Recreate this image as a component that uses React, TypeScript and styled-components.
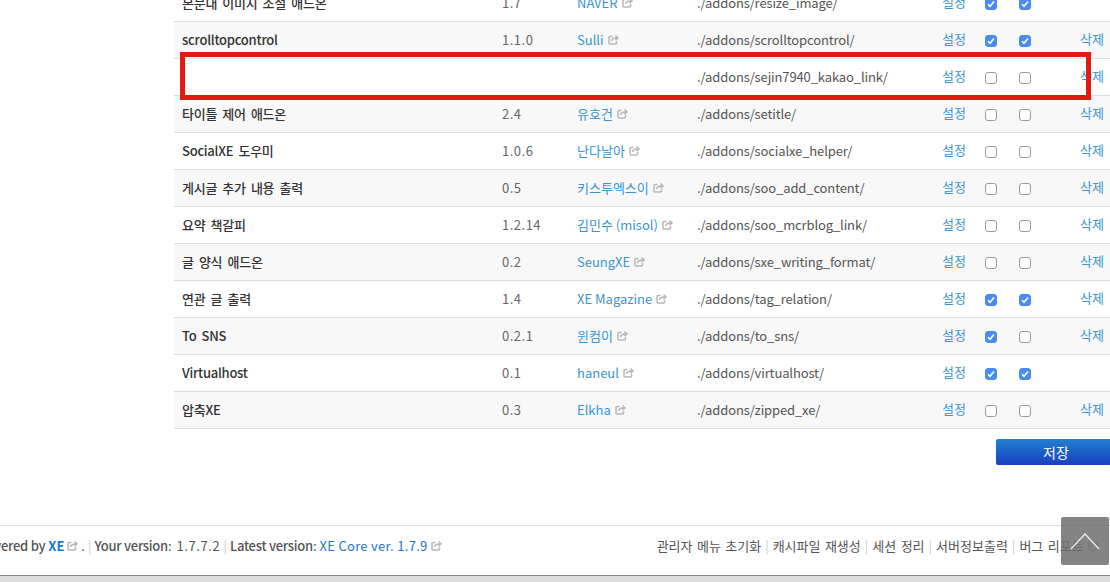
import React from "react";
import styled, { createGlobalStyle } from "styled-components";

const GlobalStyle = createGlobalStyle`
    html, body {
        margin: 0;
        padding: 0;
        height: 582px;
        overflow: hidden;
        background: #fff;
    }
    body {
        font-family: "Noto Sans CJK KR", "Liberation Sans", sans-serif;
        font-size: 13px;
        color: #333;
    }
`;
const Page = styled.div`
    position: relative;
    width: 1110px;
    height: 582px;
    overflow: hidden;
`;
const Content = styled.div`
    margin-top: -15px;
    padding-left: 174px;
`;
const Row = styled.div<{ $shade: boolean }>`
    display: grid;
    grid-template-columns: 328px 75px 120px 245px 43px 34px 61px 44px;
    align-items: center;
    width: 950px;
    height: 34px;
    padding-bottom: 2px;
    border-bottom: 1px solid #ddd;
    background: ${(p) => (p.$shade ? "#f8f8f8" : "#fff")};
`;
const Name = styled.div`
    padding-left: 8px;
    font-weight: 500;
    letter-spacing: -0.25px;
    word-spacing: 2.5px;
    color: #333;
    white-space: nowrap;
`;
const Version = styled.div`
    letter-spacing: 0.5px;
    color: #666;
    white-space: nowrap;
`;
const AddonPath = styled.div`
    letter-spacing: -0.13px;
    color: #555;
    white-space: nowrap;
`;
const Author = styled.div`
    display: flex;
    align-items: center;
    gap: 4px;
    color: #3a95d0;
    white-space: nowrap;
`;
const SetLink = styled.div`
    margin-bottom: 2px;
    color: #3a95d0;
    white-space: nowrap;
`;
const DeleteLink = styled.div`
    margin-bottom: 2px;
    color: #3a95d0;
    white-space: nowrap;
`;
const Check = styled.span<{ $on: boolean }>`
    display: flex;
    align-items: center;
    justify-content: center;
    box-sizing: border-box;
    width: 12px;
    height: 12px;
    margin-top: 4px;
    border-radius: 3px;
    border: 1px solid ${(p) => (p.$on ? "#4a8cf0" : "#9a9a9a")};
    background: ${(p) => (p.$on ? "#4a8cf0" : "#fff")};
`;
const Actions = styled.div`
    display: flex;
    justify-content: flex-end;
    width: 936px;
    padding-top: 10px;
`;
const SaveButton = styled.button`
    flex: none;
    width: 120px;
    height: 26px;
    margin-right: -6px;
    padding: 0;
    border: 0;
    border-radius: 2px;
    background: linear-gradient(#2080cf, #1a3fc0);
    color: #fff;
    font: inherit;
    font-size: 14px;
`;
const Footer = styled.div`
    position: absolute;
    left: 0;
    right: 0;
    bottom: 0;
    height: 56px;
    border-top: 1px solid #ddd;
    display: flex;
    flex-direction: column;
`;
const FooterBody = styled.div`
    flex: 1;
    display: flex;
    align-items: center;
    justify-content: space-between;
    padding: 0 11px 11px 0;
    color: #555;
`;
const FooterLeft = styled.div`
    display: flex;
    align-items: center;
    margin-left: -25px;
    white-space: nowrap;
`;
const FooterRight = styled.div`
    display: flex;
    align-items: center;
    word-spacing: 1.5px;
    white-space: nowrap;
`;
const Strong = styled.span`
    font-weight: 500;
    letter-spacing: -0.25px;
`;
const VersionNumber = styled.span`
    margin-left: 2px;
    letter-spacing: 0.6px;
`;
const BlueLink = styled.span<{ $bold?: boolean }>`
    color: #1e78c8;
    font-weight: ${(p) => (p.$bold ? 700 : 400)};
    letter-spacing: ${(p) => (p.$bold ? 0 : "0.3px")};
`;
const Sep = styled.span<{ $tight?: boolean }>`
    margin: 0 ${(p) => (p.$tight ? 3 : 4)}px;
    color: #ccc;
`;
const FooterBar = styled.div`
    height: 6px;
    border-top: 1px solid #888;
    background: #ddd;
`;
const RedBox = styled.div`
    position: absolute;
    left: 180px;
    top: 52px;
    box-sizing: border-box;
    width: 911px;
    height: 48px;
    border: 5px solid #e31a12;
    pointer-events: none;
`;
const TopButton = styled.div`
    position: absolute;
    left: 1061px;
    top: 517px;
    display: flex;
    align-items: center;
    justify-content: center;
    width: 48px;
    height: 48px;
    border-radius: 2px;
    background: rgba(110, 110, 110, 0.85);
`;

const ExternalIcon = () => (
    <svg width="11" height="11" viewBox="0 0 11 11" fill="none" stroke="#b8b8b8" strokeWidth="1.5">
        <path d="M8.500 7v2a1 1 0 0 1-1 1H2a1 1 0 0 1-1-1V3.500a1 1 0 0 1 1-1h2.500" />
        <path d="M3.500 7c.4-2 2-3.200 6-3.200M7.500 1.500l2.500 2.300-2.500 2.300" />
    </svg>
);

const Tick = () => (
    <svg width="8" height="8" viewBox="0 0 8 8" fill="none" stroke="#fff" strokeWidth="1.6">
        <path d="M1 4.200l2 2L7 1.500" />
    </svg>
);

type Addon = {
    name: string;
    version: string;
    author: string;
    path: string;
    pc: boolean;
    mobile: boolean;
    removable: boolean;
};

const addons: Addon[] = [
    { name: "본문내 이미지 조절 애드온", version: "1.7", author: "NAVER", path: "./addons/resize_image/", pc: true, mobile: true, removable: false },
    { name: "scrolltopcontrol", version: "1.1.0", author: "Sulli", path: "./addons/scrolltopcontrol/", pc: true, mobile: true, removable: true },
    { name: "", version: "", author: "", path: "./addons/sejin7940_kakao_link/", pc: false, mobile: false, removable: true },
    { name: "타이틀 제어 애드온", version: "2.4", author: "유호건", path: "./addons/setitle/", pc: false, mobile: false, removable: true },
    { name: "SocialXE 도우미", version: "1.0.6", author: "난다날아", path: "./addons/socialxe_helper/", pc: false, mobile: false, removable: true },
    { name: "게시글 추가 내용 출력", version: "0.5", author: "키스투엑스이", path: "./addons/soo_add_content/", pc: false, mobile: false, removable: true },
    { name: "요약 책갈피", version: "1.2.14", author: "김민수 (misol)", path: "./addons/soo_mcrblog_link/", pc: false, mobile: false, removable: true },
    { name: "글 양식 애드온", version: "0.2", author: "SeungXE", path: "./addons/sxe_writing_format/", pc: false, mobile: false, removable: true },
    { name: "연관 글 출력", version: "1.4", author: "XE Magazine", path: "./addons/tag_relation/", pc: true, mobile: true, removable: true },
    { name: "To SNS", version: "0.2.1", author: "윈컴이", path: "./addons/to_sns/", pc: true, mobile: false, removable: true },
    { name: "Virtualhost", version: "0.1", author: "haneul", path: "./addons/virtualhost/", pc: true, mobile: true, removable: false },
    { name: "압축XE", version: "0.3", author: "Elkha", path: "./addons/zipped_xe/", pc: false, mobile: false, removable: true },
];

const App = () => {
    return (
        <Page>
            <GlobalStyle />
            <Content>
                {addons.map((a, i) => (
                    <Row key={a.path} $shade={i % 2 === 1}>
                        <Name>{a.name}</Name>
                        <Version>{a.version}</Version>
                        <Author>
                            {a.author}
                            {a.author && <ExternalIcon />}
                        </Author>
                        <AddonPath>{a.path}</AddonPath>
                        <SetLink>설정</SetLink>
                        <div>
                            <Check $on={a.pc}>{a.pc && <Tick />}</Check>
                        </div>
                        <div>
                            <Check $on={a.mobile}>{a.mobile && <Tick />}</Check>
                        </div>
                        <DeleteLink>{a.removable ? "삭제" : ""}</DeleteLink>
                    </Row>
                ))}
                <Actions>
                    <SaveButton>저장</SaveButton>
                </Actions>
            </Content>
            <Footer>
                <FooterBody>
                    <FooterLeft>
                        <Strong>Powered by</Strong>&nbsp;<BlueLink $bold>XE</BlueLink>&nbsp;<ExternalIcon />&nbsp;.
                        <Sep $tight>|</Sep>
                        <Strong>Your version</Strong>:&nbsp;<VersionNumber>1.7.7.2</VersionNumber>
                        <Sep $tight>|</Sep>
                        <Strong>Latest version</Strong>:&nbsp;<BlueLink>XE Core ver. 1.7.9</BlueLink>&nbsp;<ExternalIcon />
                    </FooterLeft>
                    <FooterRight>
                        관리자 메뉴 초기화<Sep>|</Sep>캐시파일 재생성<Sep>|</Sep>세션 정리<Sep>|</Sep>서버정보출력<Sep>|</Sep>버그 리포트&nbsp;<ExternalIcon />
                    </FooterRight>
                </FooterBody>
                <FooterBar />
            </Footer>
            <RedBox />
            <TopButton>
                <svg width="32" height="18" viewBox="0 0 32 18" fill="none" stroke="#eee" strokeWidth="1.2">
                    <path d="M2 17L16 2l14 15" />
                </svg>
            </TopButton>
        </Page>
    );
};
export default App;
